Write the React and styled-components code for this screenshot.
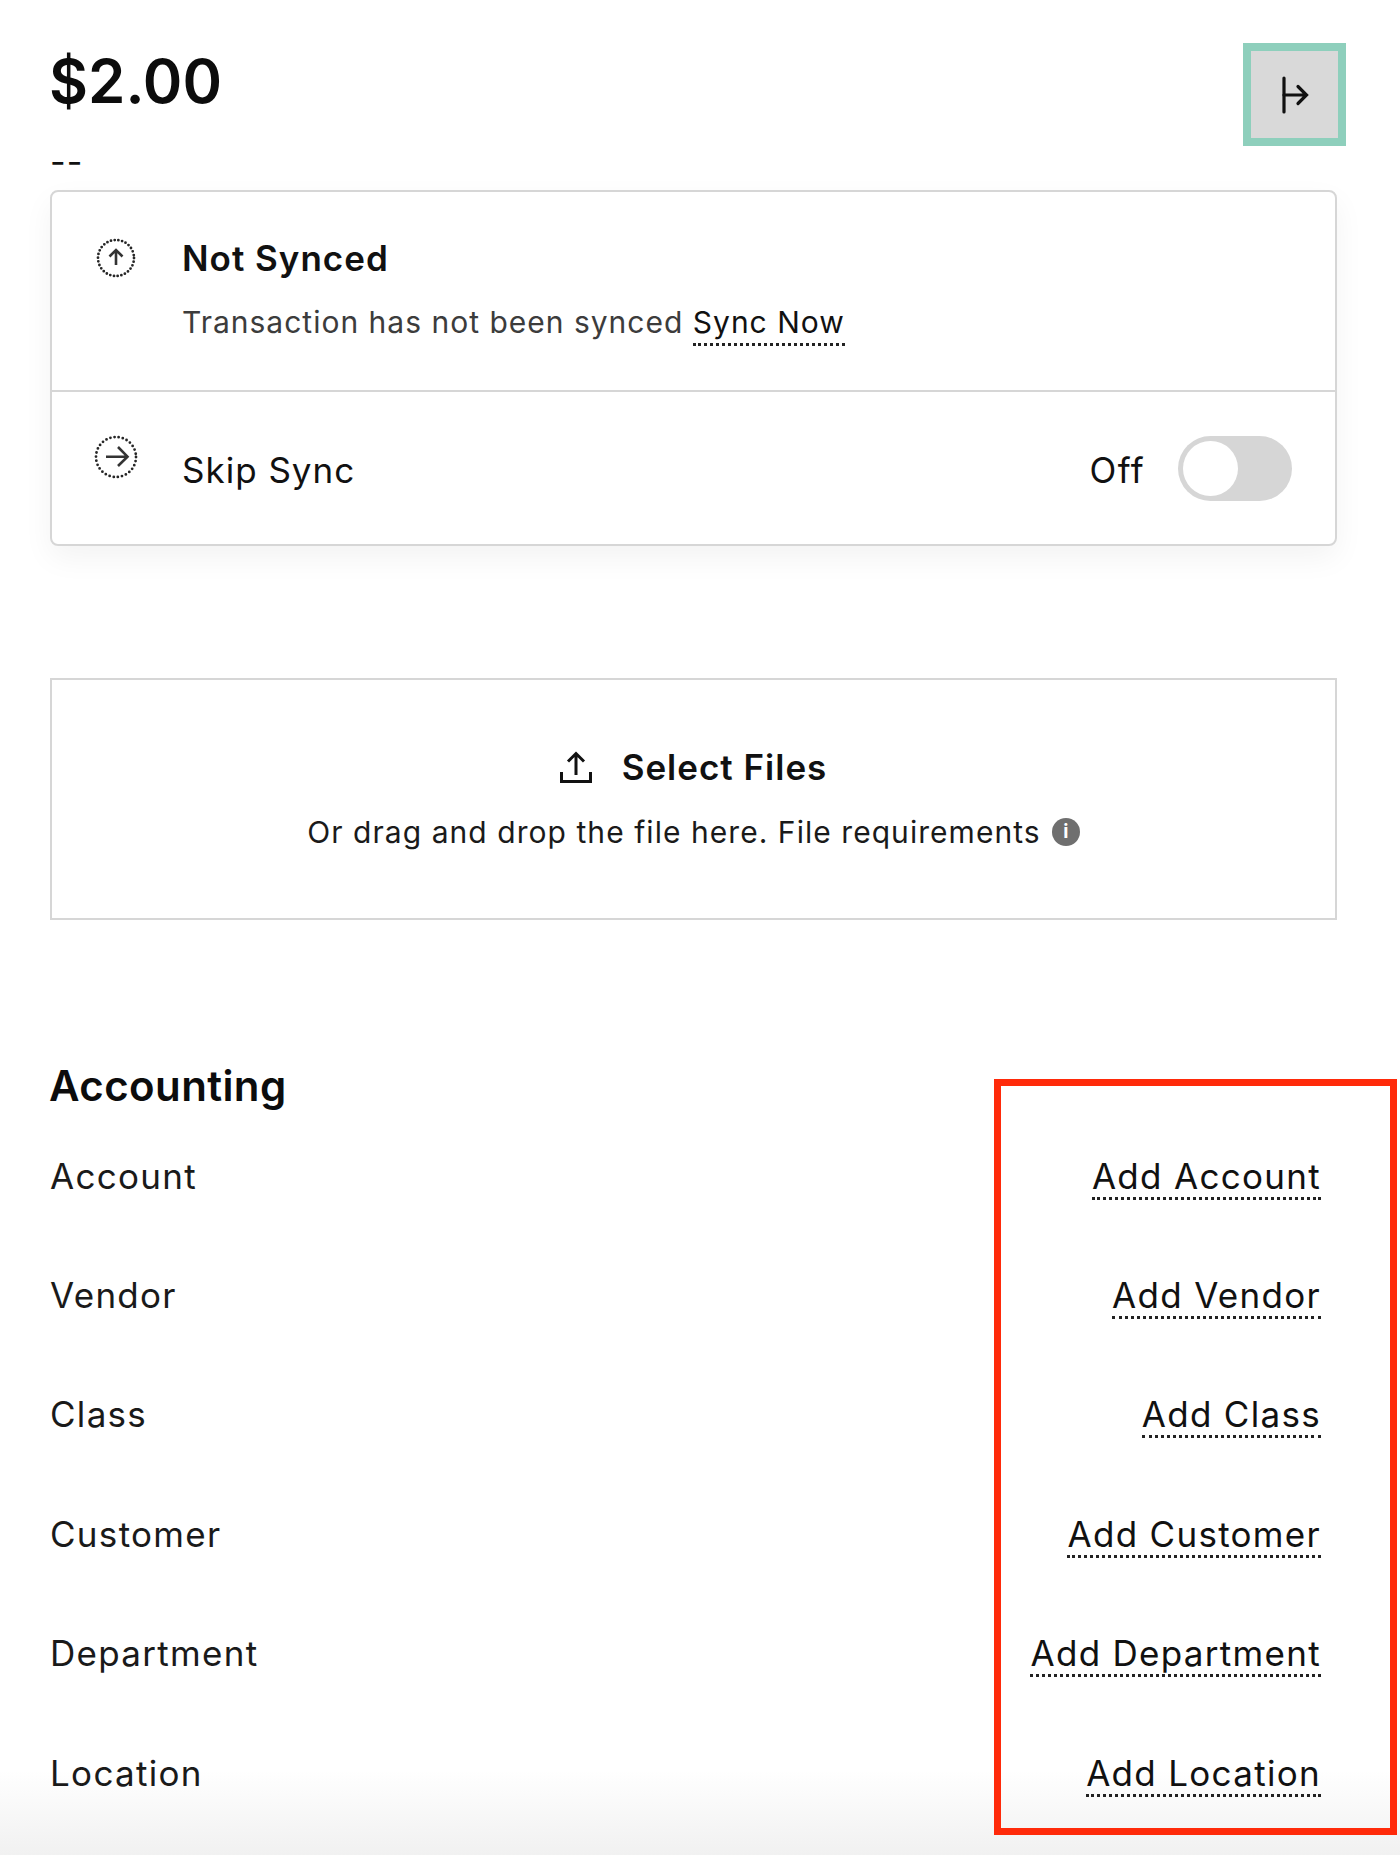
import React from 'react';
import styled, { createGlobalStyle } from 'styled-components';

const GlobalStyle = createGlobalStyle`
  html, body {
    margin: 0;
    padding: 0;
  }
  body {
    font-family: Inter, "Liberation Sans", sans-serif;
    color: #111;
    background: #fff;
  }
`;

const accountingRows = ['Account', 'Vendor', 'Class', 'Customer', 'Department', 'Location'];

const DottedCircle = ({ size }) => {
  const r = size / 2 - 2;
  // about 30 round dots around the ring
  const gap = (2 * Math.PI * r) / 30;
  return (
    <circle
      cx={size / 2}
      cy={size / 2}
      r={r}
      fill="none"
      stroke="#262626"
      strokeWidth="2.8"
      strokeLinecap="round"
      strokeDasharray={`0 ${gap}`}
    />
  );
};

const SyncUpIcon = () => (
  <svg width="40" height="40" viewBox="0 0 40 40">
    <DottedCircle size={40} />
    <path d="M20 27V12M13.5 18.5L20 12L26.5 18.5" fill="none" stroke="#333" strokeWidth="2.6" />
  </svg>
);

const SkipIcon = () => (
  <svg width="44" height="44" viewBox="0 0 44 44">
    <DottedCircle size={44} />
    <path d="M12 21.7H33M24 12L33.5 21.7L24 31" fill="none" stroke="#333" strokeWidth="2.6" />
  </svg>
);

const UploadIcon = () => (
  <svg width="32" height="32" viewBox="0 0 32 32">
    <path d="M16 24V2.5M8 10.5L16 2.5L24 10.5" fill="none" stroke="#111" strokeWidth="3" />
    <path d="M1.5 21V30.5H30.5V21" fill="none" stroke="#111" strokeWidth="3" />
  </svg>
);

const CollapseIcon = () => (
  <svg width="28" height="38" viewBox="0 0 28 38">
    <path d="M3 2V36" fill="none" stroke="#111" strokeWidth="3.2" strokeLinecap="round" />
    <path d="M3 19H25M17 10.5L25.5 19L17 27.5" fill="none" stroke="#111" strokeWidth="3.2" strokeLinecap="round" />
  </svg>
);

const App = () => (
  <Page>
    <GlobalStyle />
    <Header>
      <Amount>$2.00</Amount>
      <CollapseButton aria-label="Collapse">
        <CollapseIcon />
      </CollapseButton>
    </Header>
    <Dashes>--</Dashes>

    <Card>
      <SyncRow>
        <IconSlot>
          <SyncUpIcon />
        </IconSlot>
        <div>
          <SyncTitle>Not Synced</SyncTitle>
          <SyncText>
            Transaction has not been synced <DottedLink>Sync Now</DottedLink>
          </SyncText>
        </div>
      </SyncRow>
      <SkipRow>
        <SkipIconSlot>
          <SkipIcon />
        </SkipIconSlot>
        <SkipLabel>Skip Sync</SkipLabel>
        <OffLabel>Off</OffLabel>
        <Toggle>
          <Knob />
        </Toggle>
      </SkipRow>
    </Card>

    <UploadBox>
      <SelectFiles>
        <UploadIcon />
        Select Files
      </SelectFiles>
      <DropHint>
        Or drag and drop the file here. File requirements
        <InfoDot>i</InfoDot>
      </DropHint>
    </UploadBox>

    <SectionTitle>Accounting</SectionTitle>
    {accountingRows.map((name) => (
      <FieldRow key={name}>
        <FieldLabel>{name}</FieldLabel>
        <AddLink>Add {name}</AddLink>
      </FieldRow>
    ))}

    <Highlight />
  </Page>
);

const Page = styled.div`
  position: relative;
  box-sizing: border-box;
  height: 1855px;
  padding: 43px 63px 0 50px;
  overflow: hidden;
  background: linear-gradient(to bottom, #fff 0, #fff 1770px, #f1f1f1 1855px);
`;

const Header = styled.div`
  display: flex;
  justify-content: space-between;
  align-items: flex-start;
  height: 103px;
`;

const Amount = styled.div`
  margin-left: -1px;
  font-size: 60px;
  line-height: 77px;
  font-weight: 600;
  color: #0c0c0c;
`;

const CollapseButton = styled.div`
  box-sizing: border-box;
  display: flex;
  align-items: center;
  justify-content: center;
  width: 103px;
  height: 103px;
  margin-right: -9px;
  border: 8px solid #8ecfbc;
  background: #d9d9d9;
`;

const Dashes = styled.div`
  height: 32px;
  font-size: 34px;
  line-height: 32px;
  letter-spacing: 1px;
`;

const Card = styled.div`
  box-sizing: border-box;
  height: 356px;
  margin-top: 12px;
  border: 2px solid #d6d6d6;
  border-radius: 8px;
  background: #fff;
  box-shadow: 0 12px 30px rgba(0, 0, 0, 0.05);
`;

const SyncRow = styled.div`
  box-sizing: border-box;
  display: flex;
  gap: 46px;
  height: 200px;
  padding: 44px 0 0 44px;
  border-bottom: 2px solid #d6d6d6;
`;

const IconSlot = styled.div`
  flex: none;
  width: 40px;
  height: 44px;
  padding-top: 2px;
  box-sizing: border-box;
`;

const SyncTitle = styled.div`
  font-size: 35px;
  line-height: 44px;
  font-weight: 600;
  letter-spacing: 1px;
  color: #111;
`;

const SyncText = styled.div`
  margin-top: 20px;
  font-size: 30px;
  line-height: 44px;
  letter-spacing: 1px;
  color: #3c3c3c;
`;

const DottedLink = styled.span`
  color: #111;
  padding-bottom: 3px;
  border-bottom: 3px dotted #222;
`;

const SkipRow = styled.div`
  display: flex;
  align-items: center;
  height: 152px;
  padding: 0 43px 0 42px;
`;

const SkipIconSlot = styled.div`
  flex: none;
  width: 44px;
  height: 44px;
  margin: -22px 44px 0 0;
`;

const SkipLabel = styled.div`
  flex: 1;
  font-size: 35px;
  line-height: 44px;
  margin-top: 4px;
  letter-spacing: 1px;
`;

const OffLabel = styled.div`
  font-size: 35px;
  line-height: 44px;
  margin: 4px 33px 0 0;
  letter-spacing: 1.4px;
`;

const Toggle = styled.div`
  box-sizing: border-box;
  width: 114px;
  height: 65px;
  padding: 5px;
  border-radius: 33px;
  background: #d6d6d6;
`;

const Knob = styled.div`
  width: 55px;
  height: 55px;
  border-radius: 50%;
  background: #fff;
`;

const UploadBox = styled.div`
  box-sizing: border-box;
  display: flex;
  flex-direction: column;
  align-items: center;
  justify-content: center;
  gap: 21px;
  height: 242px;
  margin-top: 132px;
  border: 2px solid #d6d6d6;
`;

const SelectFiles = styled.div`
  display: flex;
  align-items: center;
  gap: 30px;
  font-size: 35px;
  line-height: 44px;
  font-weight: 600;
  letter-spacing: 1px;
  color: #111;
`;

const DropHint = styled.div`
  display: flex;
  align-items: center;
  gap: 11px;
  font-size: 30px;
  line-height: 44px;
  letter-spacing: 1.05px;
  color: #1a1a1a;
`;

const InfoDot = styled.span`
  display: flex;
  align-items: center;
  justify-content: center;
  width: 28px;
  height: 28px;
  border-radius: 50%;
  background: #6f6f6f;
  color: #fff;
  font-size: 19px;
  font-weight: 700;
  letter-spacing: 0;
`;

const SectionTitle = styled.div`
  margin: 144px 0 8px -1px;
  font-size: 42px;
  line-height: 44px;
  font-weight: 600;
  letter-spacing: 0.4px;
  color: #0c0c0c;
`;

const FieldRow = styled.div`
  display: flex;
  justify-content: space-between;
  align-items: center;
  height: 119.4px;
  padding-right: 16px;
`;

const FieldLabel = styled.div`
  font-size: 35px;
  line-height: 44px;
  letter-spacing: 1.3px;
  color: #1a1a1a;
`;

const AddLink = styled.div`
  margin-top: 4px;
  padding-bottom: 1px;
  font-size: 35px;
  line-height: 40px;
  letter-spacing: 1.3px;
  color: #111;
  border-bottom: 3px dotted #222;
`;

const Highlight = styled.div`
  position: absolute;
  left: 994px;
  top: 1079px;
  box-sizing: border-box;
  width: 403px;
  height: 756px;
  border: 7px solid #ff2a0a;
  pointer-events: none;
`;

export default App;
